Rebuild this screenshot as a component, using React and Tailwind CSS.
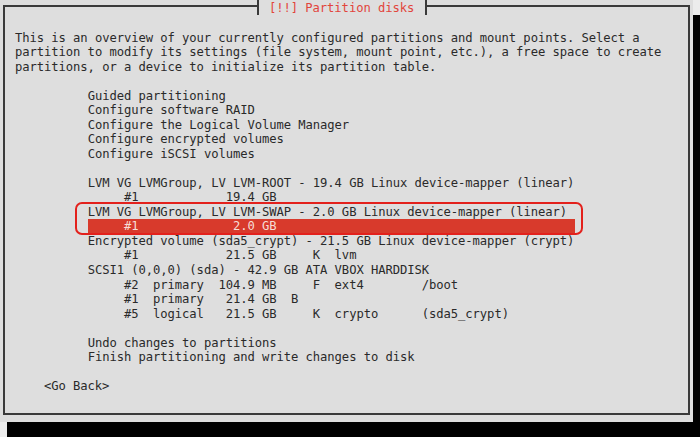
import React from "react";

const intro = [
  "This is an overview of your currently configured partitions and mount points. Select a",
  "partition to modify its settings (file system, mount point, etc.), a free space to create",
  "partitions, or a device to initialize its partition table.",
];

const items = [
  "Guided partitioning",
  "Configure software RAID",
  "Configure the Logical Volume Manager",
  "Configure encrypted volumes",
  "Configure iSCSI volumes",
  "",
  "LVM VG LVMGroup, LV LVM-ROOT - 19.4 GB Linux device-mapper (linear)",
  "     #1            19.4 GB",
  "LVM VG LVMGroup, LV LVM-SWAP - 2.0 GB Linux device-mapper (linear)",
  "     #1             2.0 GB",
  "Encrypted volume (sda5_crypt) - 21.5 GB Linux device-mapper (crypt)",
  "     #1            21.5 GB     K  lvm",
  "SCSI1 (0,0,0) (sda) - 42.9 GB ATA VBOX HARDDISK",
  "     #2  primary  104.9 MB     F  ext4        /boot",
  "     #1  primary   21.4 GB  B",
  "     #5  logical   21.5 GB     K  crypto      (sda5_crypt)",
  "",
  "Undo changes to partitions",
  "Finish partitioning and write changes to disk",
];

const selected = 9;

function Line({ text, className = "" }) {
  return (
    <div className={`h-[14.54px] leading-[14.54px] whitespace-pre ${className}`}>
      {text}
    </div>
  );
}

export default function App() {
  return (
    <div className="w-[700px] h-[437px] overflow-hidden bg-[#ececec] font-['DejaVu_Sans_Mono',monospace] text-[12.2px] tracking-[-0.075px] text-[#2a2a2a]">
      <div className="relative w-[693px] h-[422px] bg-[#dedede] shadow-[7px_15px_0_0_#000] pt-[5px] pl-[3px]">
        <div className="w-[687px] h-[410px] border-2 border-[#3a3a3a] pl-[10px] pt-[23.5px]">
          {intro.map((t, i) => (
            <Line key={i} text={t} />
          ))}
          <Line text="" />
          <div className="ml-[72.7px]">
            {items.map((t, i) =>
              i === selected ? (
                <Line key={i} text={t} className="w-[487px] bg-[#d83a2c] text-[#f6ddd6]" />
              ) : (
                <Line key={i} text={t} />
              )
            )}
          </div>
          <Line text="" />
          <Line text="<Go Back>" className="ml-[29px]" />
        </div>

        <div className="absolute left-[257px] top-0 h-[14.54px] leading-[14.54px] pt-[1px] bg-[#dedede] border-l-2 border-r-2 border-[#3a3a3a] pl-[10px] pr-[11px] text-[#e2453c] whitespace-pre">
          [!!] Partition disks
        </div>

        <div className="absolute left-[75px] top-[202px] w-[508px] h-[33px] border-2 border-[#e3211c] rounded-[7px]" />
      </div>
    </div>
  );
}
